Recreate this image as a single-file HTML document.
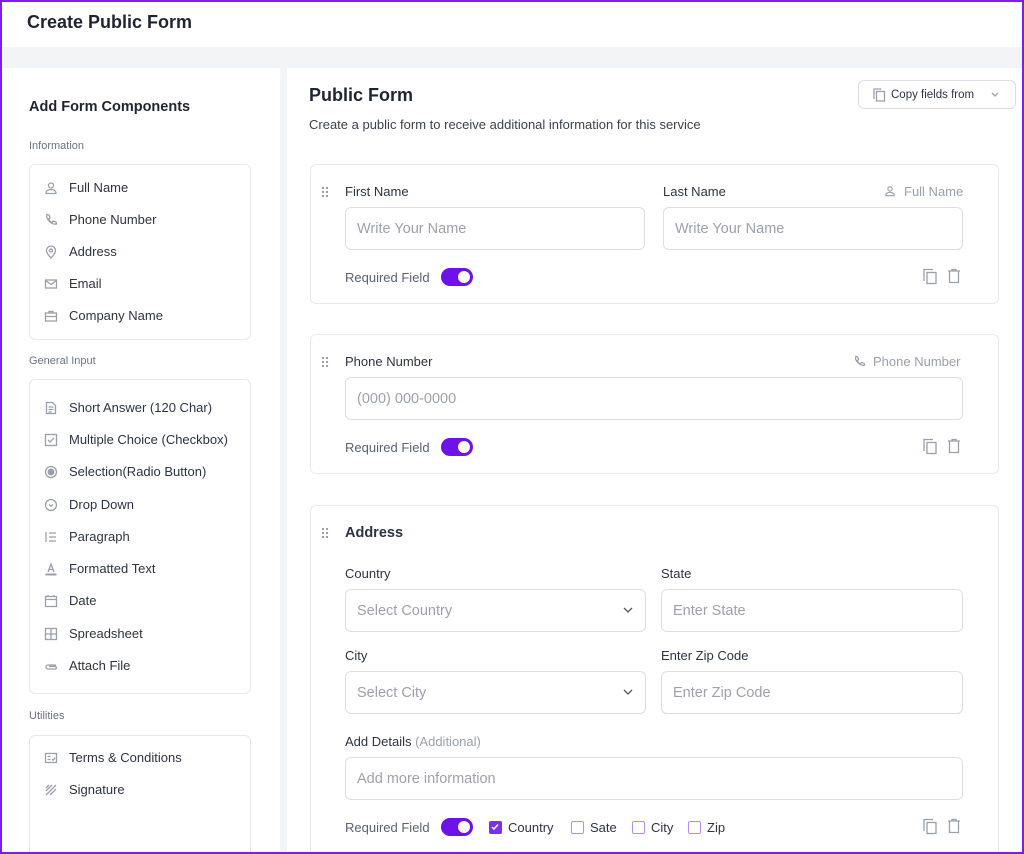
<!DOCTYPE html>
<html style="width:1024px;height:854px;overflow:hidden"><head><meta charset="utf-8"><style>
*{box-sizing:border-box;margin:0;padding:0}
body{width:1024px;height:854px;overflow:hidden;background:#f3f4f6;font-family:"Liberation Sans",sans-serif;color:#1f2430;position:relative}
.frame{position:absolute;left:0;top:0;width:1024px;height:854px;border:2px solid #7a1ff0;z-index:10;pointer-events:none}
.a{position:absolute}
.hdr{left:0;top:0;width:1024px;height:47px;background:#fff}
.left{left:2px;top:68px;width:278px;height:786px;background:#fff}
.right{left:287px;top:68px;width:737px;height:786px;background:#fff}
.card{position:absolute;background:#fff;border:1px solid #e8e9ec;border-radius:6px}
.sec{font-size:11px;color:#6b7280}
.item{position:absolute;left:14px;font-size:13px;color:#2d3340;display:flex;align-items:center}
.item svg{width:14px;height:14px;margin-right:11px;stroke:#9aa0aa;fill:none;stroke-width:1.3}
.lbl{position:absolute;font-size:13px;color:#2d3340}
.inp{position:absolute;border:1px solid #dcdee3;border-radius:6px;height:43px;font-size:14.5px;color:#9ca1ab;padding-left:11px;line-height:43px}
.req{position:absolute;font-size:13px;color:#5b6270}
.tog{position:absolute;width:32px;height:18px;border-radius:9px;background:#6d12e8}
.tog:after{content:"";position:absolute;right:3px;top:3px;width:12px;height:12px;border-radius:50%;background:#fff}
.drag{position:absolute;width:8px;height:11px;background:radial-gradient(circle,#9aa0aa 1.1px,transparent 1.3px) 0 0/4px 4px}
.ic{position:absolute;stroke:#9aa0aa;fill:none;stroke-width:1.3}
.cb{display:inline-block;width:13px;height:13px;border:1.5px solid #b58cf5;border-radius:2px;vertical-align:-2px;margin-right:6px}
.chev{position:absolute;right:12px;top:17px}
</style></head><body>
<div class="frame"></div>
<div class="a hdr"></div>
<div class="a" style="left:27px;top:12px;font-size:18px;font-weight:bold;color:#1f2430">Create Public Form</div>
<div class="a left"></div>
<div class="a right"></div>

<div class="a" style="left:29px;top:99px;font-size:14.5px;font-weight:bold">Add Form Components</div>
<div class="a sec" style="left:29px;top:140px">Information</div>
<div class="card" style="left:29px;top:164px;width:222px;height:176px">
<div class="item" style="top:15px"><svg viewBox="0 0 14 14"><circle cx="7" cy="4.5" r="2.5"/><path d="M2 12.5c0-3 2.5-4 5-4s5 1 5 4z"/></svg>Full Name</div>
<div class="item" style="top:47px"><svg viewBox="0 0 14 14"><path d="M3 1.5l2 .5 1 3-1.5 1c.8 1.8 2 3 3.5 3.5l1-1.5 3 1 .5 2c-5 1-11-5-9.5-9.5z"/></svg>Phone Number</div>
<div class="item" style="top:79px"><svg viewBox="0 0 14 14"><path d="M7 13s-4.5-4.5-4.5-7.5a4.5 4.5 0 0 1 9 0C11.5 8.5 7 13 7 13z"/><circle cx="7" cy="5.5" r="1.5"/></svg>Address</div>
<div class="item" style="top:111px"><svg viewBox="0 0 14 14"><rect x="1.5" y="3" width="11" height="8"/><path d="M1.5 3.5l5.5 4 5.5-4"/></svg>Email</div>
<div class="item" style="top:143px"><svg viewBox="0 0 14 14"><rect x="1.5" y="4" width="11" height="8"/><path d="M5 4V2.5h4V4M1.5 7.5h11"/></svg>Company Name</div>
</div>
<div class="a sec" style="left:29px;top:355px">General Input</div>
<div class="card" style="left:29px;top:379px;width:222px;height:315px">
<div class="item" style="top:20px"><svg viewBox="0 0 14 14"><path d="M2.5 1.5h6l3 3v8h-9z M4.5 6h5M4.5 8.5h5M4.5 11h3"/></svg>Short Answer (120 Char)</div>
<div class="item" style="top:52px"><svg viewBox="0 0 14 14"><rect x="1.5" y="1.5" width="11" height="11"/><path d="M4 7l2 2 4-4"/></svg>Multiple Choice (Checkbox)</div>
<div class="item" style="top:84px"><svg viewBox="0 0 14 14"><circle cx="7" cy="7" r="5.5"/><circle cx="7" cy="7" r="2.8" fill="#9aa0aa"/></svg>Selection(Radio Button)</div>
<div class="item" style="top:117px"><svg viewBox="0 0 14 14"><circle cx="7" cy="7" r="5.5"/><path d="M5 6.5l2 1.5 2-1.5"/></svg>Drop Down</div>
<div class="item" style="top:149px"><svg viewBox="0 0 14 14"><path d="M2 2v10M5 3h7M5 7h7M5 11h7"/></svg>Paragraph</div>
<div class="item" style="top:181px"><svg viewBox="0 0 14 14"><path d="M4 10l3-8 3 8M5 7.5h4"/><path d="M1.5 12.5h11" stroke-width="2"/></svg>Formatted Text</div>
<div class="item" style="top:213px"><svg viewBox="0 0 14 14"><rect x="1.5" y="2.5" width="11" height="10"/><path d="M1.5 5.5h11M4 1v2M10 1v2"/></svg>Date</div>
<div class="item" style="top:246px"><svg viewBox="0 0 14 14"><rect x="1.5" y="1.5" width="11" height="11"/><path d="M7 1.5v11M1.5 7h11"/></svg>Spreadsheet</div>
<div class="item" style="top:278px"><svg viewBox="0 0 14 14"><path d="M12 6H4a2 2 0 0 0 0 4h7a1.3 1.3 0 0 0 0-2.6H5"/></svg>Attach File</div>
</div>
<div class="a sec" style="left:29px;top:710px">Utilities</div>
<div class="card" style="left:29px;top:735px;width:222px;height:130px">
<div class="item" style="top:14px"><svg viewBox="0 0 14 14"><rect x="1.5" y="2.5" width="11" height="9"/><path d="M3.5 5.5h3M3.5 8.5h3M8 8l1.2 1.2 2-2.5"/></svg>Terms &amp; Conditions</div>
<div class="item" style="top:46px"><svg viewBox="0 0 14 14"><path d="M2 12L12 2M2 8l6-6M6 12l6-6M2 5l3-3"/></svg>Signature</div>
</div>

<div class="a" style="left:309px;top:85px;font-size:18px;font-weight:bold">Public Form</div>
<div class="a" style="left:309px;top:117px;font-size:13px;color:#3a4150">Create a public form to receive additional information for this service</div>
<div class="card" style="left:858px;top:80px;width:158px;height:29px;border-color:#dcdee3;font-size:11.5px;color:#2d3340;padding:8px 0 0 32px">Copy fields from
<svg class="ic" style="left:14px;top:7px" width="13" height="14" viewBox="0 0 13 14"><rect x="3.5" y="3.5" width="8" height="9.5"/><path d="M1 11V1h7.5"/></svg>
<svg class="ic" style="left:132px;top:11px" width="8" height="6" viewBox="0 0 8 6"><path d="M1 1l3 3 3-3"/></svg></div>

<!-- card 1 -->
<div class="card" style="left:310px;top:164px;width:689px;height:140px"></div>
<div class="drag" style="left:321px;top:186px"></div>
<div class="lbl" style="left:345px;top:184px">First Name</div>
<div class="lbl" style="left:663px;top:184px">Last Name</div>
<div class="lbl" style="left:904px;top:184px;color:#9aa0aa">Full Name</div>
<svg class="ic" style="left:884px;top:185px" width="12" height="12" viewBox="0 0 14 14"><circle cx="7" cy="4.5" r="2.5"/><path d="M2 12.5c0-3 2.5-4 5-4s5 1 5 4z"/></svg>
<div class="inp" style="left:345px;top:207px;width:300px">Write Your Name</div>
<div class="inp" style="left:663px;top:207px;width:300px">Write Your Name</div>
<div class="req" style="left:345px;top:270px">Required Field</div>
<div class="tog" style="left:441px;top:268px"></div>
<svg class="ic" style="left:922px;top:268px" width="16" height="17" viewBox="0 0 16 17"><rect x="5" y="4.5" width="9" height="11"/><path d="M2 13V1.5h9"/></svg>
<svg class="ic" style="left:947px;top:268px" width="14" height="16" viewBox="0 0 14 16"><path d="M1 3h12M5 3V1.5h4V3M2.5 3v11.5h9V3"/></svg>

<!-- card 2 -->
<div class="card" style="left:310px;top:334px;width:689px;height:140px"></div>
<div class="drag" style="left:321px;top:356px"></div>
<div class="lbl" style="left:345px;top:354px">Phone Number</div>
<div class="lbl" style="left:873px;top:354px;color:#9aa0aa">Phone Number</div>
<svg class="ic" style="left:853px;top:355px" width="13" height="13" viewBox="0 0 14 14"><path d="M3 1.5l2 .5 1 3-1.5 1c.8 1.8 2 3 3.5 3.5l1-1.5 3 1 .5 2c-5 1-11-5-9.5-9.5z"/></svg>
<div class="inp" style="left:345px;top:377px;width:618px">(000) 000-0000</div>
<div class="req" style="left:345px;top:440px">Required Field</div>
<div class="tog" style="left:441px;top:438px"></div>
<svg class="ic" style="left:922px;top:438px" width="16" height="17" viewBox="0 0 16 17"><rect x="5" y="4.5" width="9" height="11"/><path d="M2 13V1.5h9"/></svg>
<svg class="ic" style="left:947px;top:438px" width="14" height="16" viewBox="0 0 14 16"><path d="M1 3h12M5 3V1.5h4V3M2.5 3v11.5h9V3"/></svg>

<!-- card 3 -->
<div class="card" style="left:310px;top:505px;width:689px;height:360px"></div>
<div class="drag" style="left:321px;top:527px"></div>
<div class="lbl" style="left:345px;top:525px;font-size:14.5px;font-weight:bold">Address</div>
<div class="lbl" style="left:345px;top:566px">Country</div>
<div class="lbl" style="left:661px;top:566px">State</div>
<div class="inp" style="left:345px;top:589px;width:301px">Select Country<svg class="ic chev" width="10" height="7" viewBox="0 0 10 7"><path d="M1 1l4 4 4-4" stroke="#555"/></svg></div>
<div class="inp" style="left:661px;top:589px;width:302px">Enter State</div>
<div class="lbl" style="left:345px;top:648px">City</div>
<div class="lbl" style="left:661px;top:648px">Enter Zip Code</div>
<div class="inp" style="left:345px;top:671px;width:301px">Select City<svg class="ic chev" width="10" height="7" viewBox="0 0 10 7"><path d="M1 1l4 4 4-4" stroke="#555"/></svg></div>
<div class="inp" style="left:661px;top:671px;width:302px">Enter Zip Code</div>
<div class="lbl" style="left:345px;top:734px">Add Details <span style="color:#9aa0aa">(Additional)</span></div>
<div class="inp" style="left:345px;top:757px;width:618px">Add more information</div>
<div class="req" style="left:345px;top:820px">Required Field</div>
<div class="tog" style="left:441px;top:818px"></div>
<div class="lbl" style="left:489px;top:820px"><span class="cb" style="background:#7c2ff0;border-color:#7c2ff0;position:relative"><svg style="position:absolute;left:0;top:0" width="10" height="10" viewBox="0 0 10 10"><path d="M2 5l2 2 4-4.5" stroke="#fff" stroke-width="1.5" fill="none"/></svg></span>Country</div>
<div class="lbl" style="left:571px;top:820px"><span class="cb"></span>Sate</div>
<div class="lbl" style="left:632px;top:820px"><span class="cb"></span>City</div>
<div class="lbl" style="left:688px;top:820px"><span class="cb"></span>Zip</div>
<svg class="ic" style="left:922px;top:818px" width="16" height="17" viewBox="0 0 16 17"><rect x="5" y="4.5" width="9" height="11"/><path d="M2 13V1.5h9"/></svg>
<svg class="ic" style="left:947px;top:818px" width="14" height="16" viewBox="0 0 14 16"><path d="M1 3h12M5 3V1.5h4V3M2.5 3v11.5h9V3"/></svg>
</body></html>
